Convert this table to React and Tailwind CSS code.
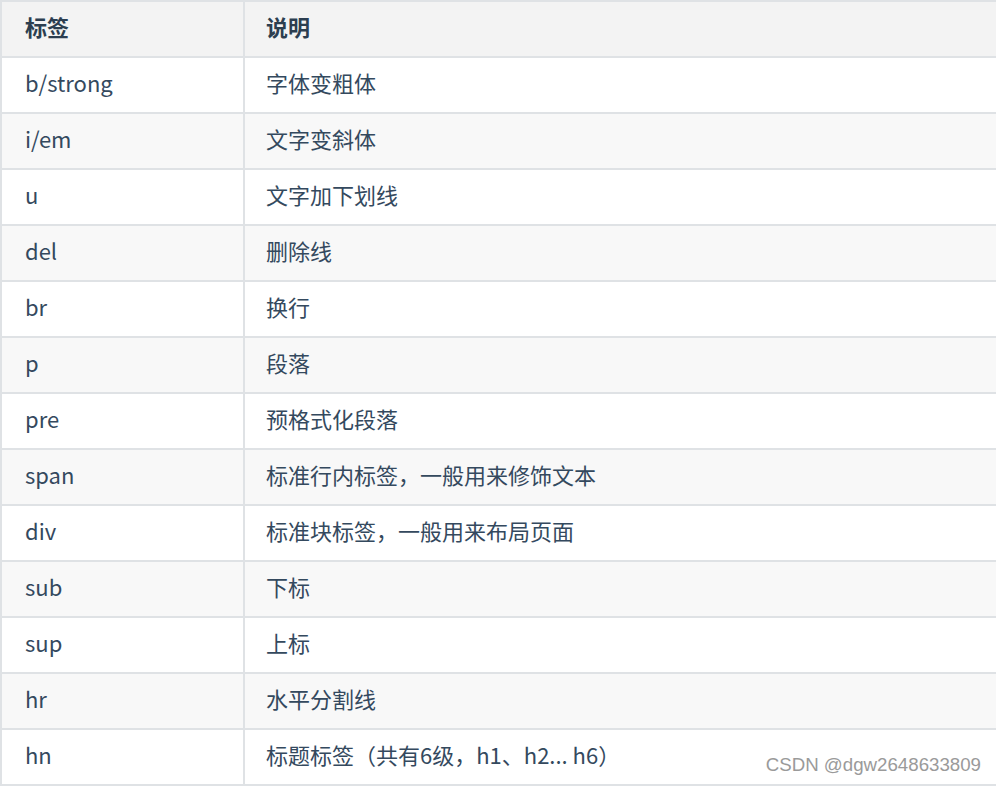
import React from 'react'

const rows = [
  ['b/strong', '字体变粗体'],
  ['i/em', '文字变斜体'],
  ['u', '文字加下划线'],
  ['del', '删除线'],
  ['br', '换行'],
  ['p', '段落'],
  ['pre', '预格式化段落'],
  ['span', '标准行内标签，一般用来修饰文本'],
  ['div', '标准块标签，一般用来布局页面'],
  ['sub', '下标'],
  ['sup', '上标'],
  ['hr', '水平分割线'],
  ['hn', '标题标签（共有6级，h1、h2... h6）'],
]

const font = { fontFamily: '"Noto Sans CJK SC", "Noto Sans", sans-serif' }

export default function App() {
  return (
    <div className="relative w-[996px] h-[786px] overflow-hidden bg-white" style={font}>
      <div className="w-[1010px] border-t-2 border-l-2 border-[#dfe2e5] text-[22px]">
        {/* Header */}
        <div className="flex h-[56px] border-b-2 border-[#dfe2e5] bg-[#f3f3f3] font-bold text-[#2c3e50]">
          <div className="w-[243px] shrink-0 border-r-2 border-[#dfe2e5] pl-[23px] pb-[6px] flex items-center">标签</div>
          <div className="flex-1 pl-[21px] pb-[6px] flex items-center">说明</div>
        </div>

        {rows.map(([tag, desc], i) => (
          <div
            key={tag}
            className={`flex h-[56px] border-b-2 border-[#dfe2e5] text-[#34495e] ${i % 2 === 1 ? 'bg-[#f8f8f8]' : 'bg-white'}`}
          >
            <div className="w-[243px] shrink-0 border-r-2 border-[#dfe2e5] pl-[23px] pb-[6px] flex items-center">{tag}</div>
            <div className="flex-1 pl-[21px] pb-[6px] flex items-center">{desc}</div>
          </div>
        ))}
      </div>

      {/* watermark */}
      <div
        className="absolute right-[15px] bottom-[11px] text-[18.7px] text-[#9a9a9a] leading-none"
        style={{ fontFamily: '"Liberation Sans", Arial, sans-serif', textShadow: '0 0 1px #fff, 0 0 1px #fff' }}
      >
        CSDN @dgw2648633809
      </div>
    </div>
  )
}
